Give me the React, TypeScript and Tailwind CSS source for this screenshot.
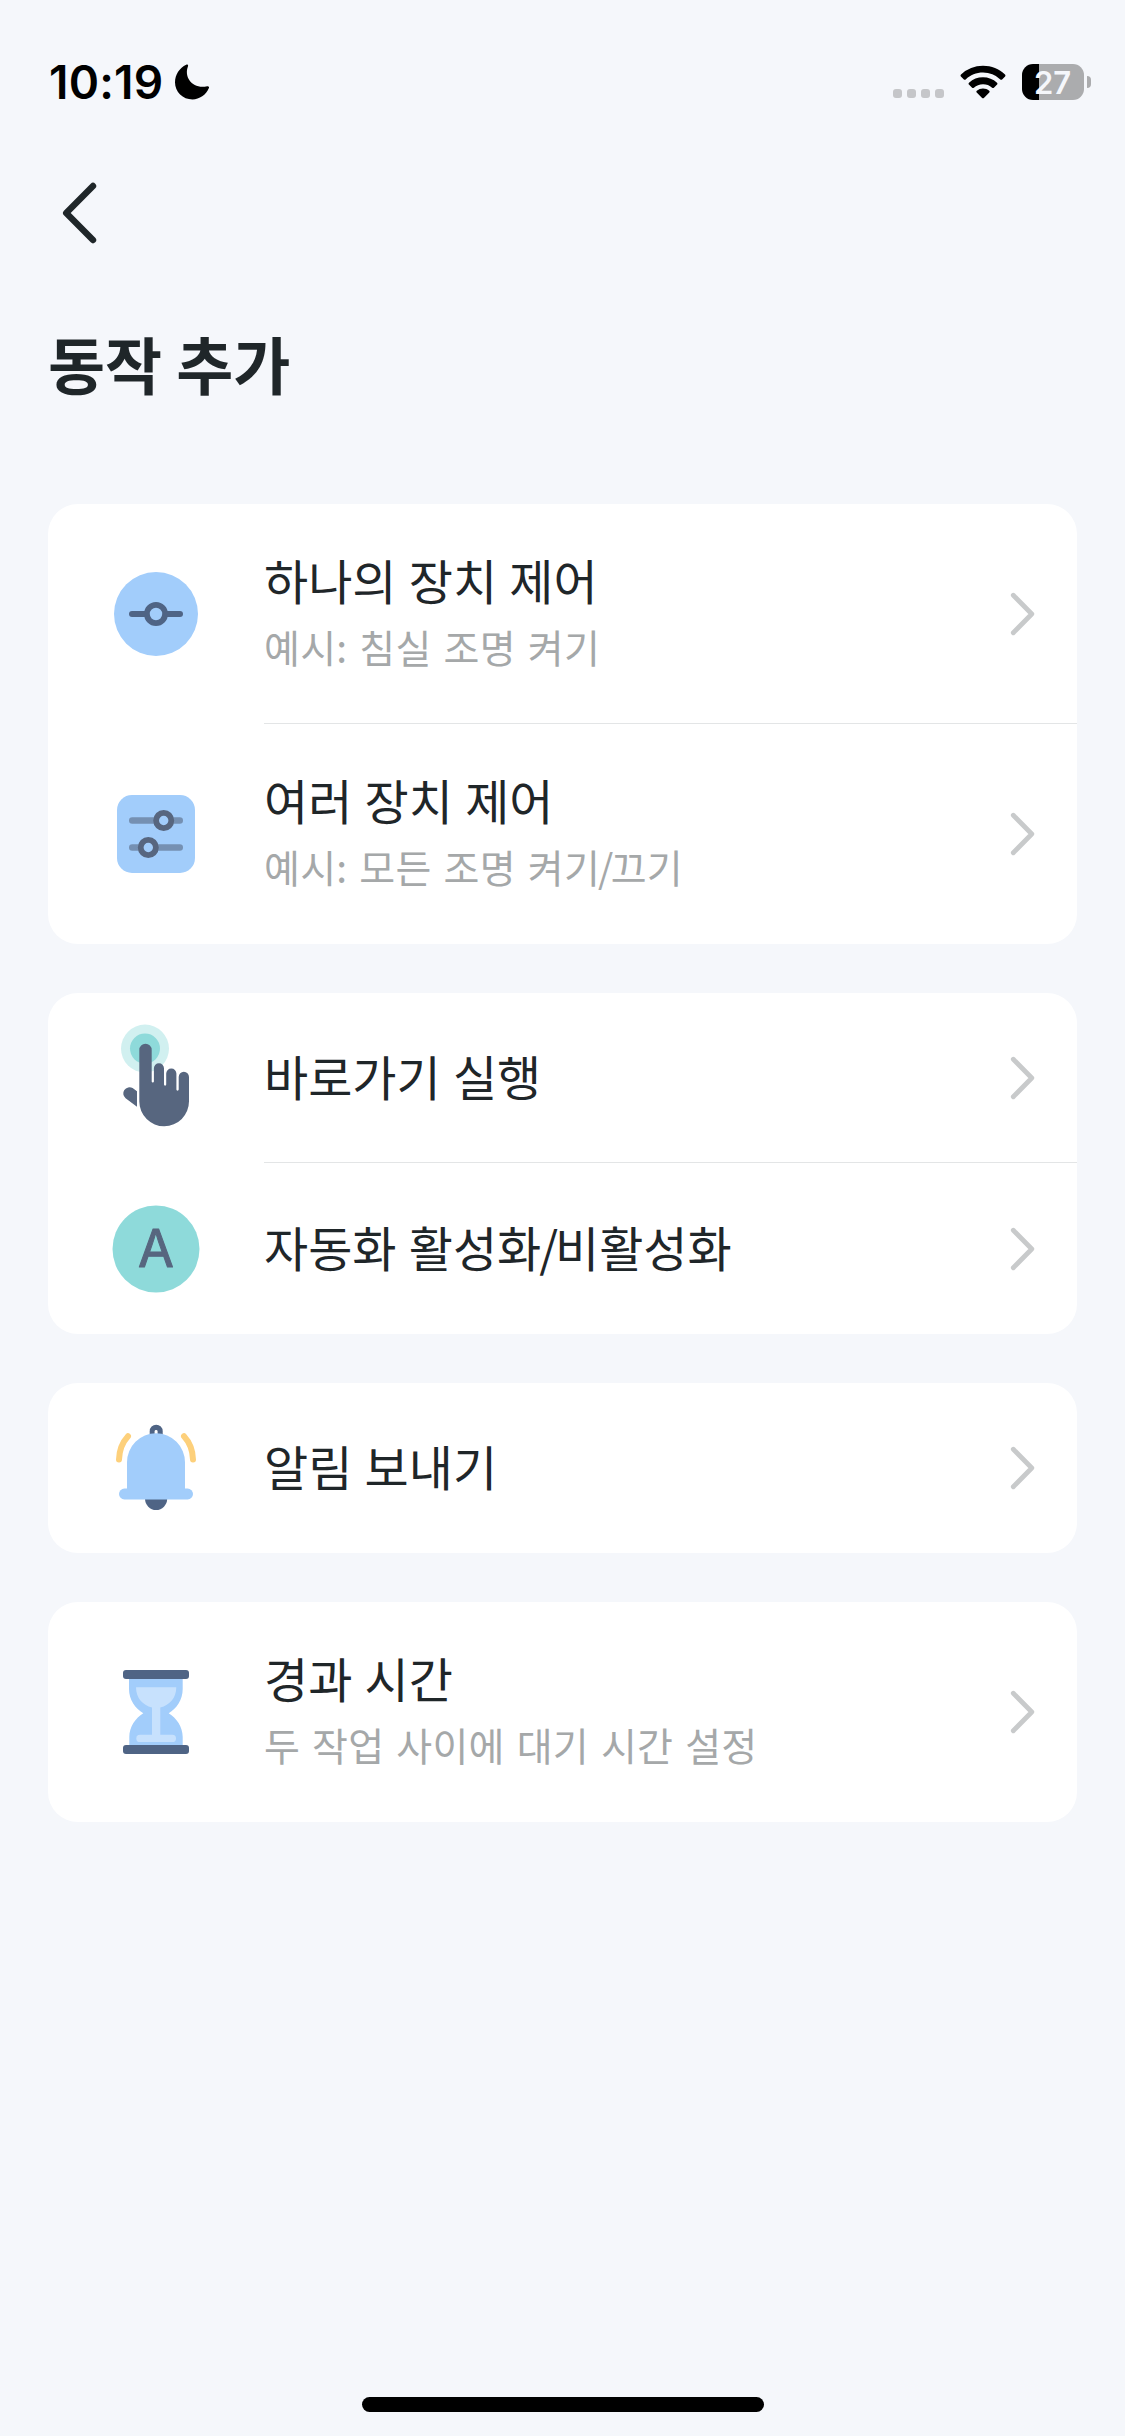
import type { ReactNode } from "react";

const Chevron = () => (
  <svg className="mr-[41px] h-[46px] w-[28px] shrink-0" viewBox="0 0 28 46" fill="none">
    <path d="M5.3 4.3 23.8 23 5.3 41.7" stroke="#c8cacb" strokeWidth="4.8" strokeLinecap="round" strokeLinejoin="round" />
  </svg>
);

const Icon = ({ children }: { children: ReactNode }) => (
  <svg className="h-[108px] w-[108px] shrink-0" viewBox="0 0 108 108" fill="none">
    {children}
  </svg>
);

const SingleDeviceIcon = () => (
  <Icon>
    <circle cx="54" cy="54" r="42" fill="#a2cdfb" />
    <path d="M30 54h48" stroke="#4f6485" strokeWidth="6" strokeLinecap="round" />
    <circle cx="54" cy="54" r="9.1" fill="#a2cdfb" stroke="#4f6485" strokeWidth="5.8" />
  </Icon>
);

const MultiDeviceIcon = () => (
  <Icon>
    <rect x="15" y="15" width="78" height="78" rx="15" fill="#a2cdfb" />
    <path d="M30.2 40.5h47.6M30.2 67.5h47.6" stroke="#7590b2" strokeWidth="6.4" strokeLinecap="round" />
    <circle cx="61.7" cy="40.5" r="7.6" fill="#a2cdfb" stroke="#57667f" strokeWidth="5.8" />
    <circle cx="46.3" cy="67.5" r="7.6" fill="#a2cdfb" stroke="#57667f" strokeWidth="5.8" />
  </Icon>
);

const TapIcon = () => (
  <Icon>
    <circle cx="43" cy="24.6" r="24" fill="#d1f0f0" />
    <circle cx="43" cy="24.6" r="15" fill="#8edada" />
    <path
      d="M37.3 77.5V26a6.2 6.2 0 0 1 12.4 0v31.4a1.1 1.1 0 0 0 2.2 0V44.3a5 5 0 0 1 10.1 0v16.3a1.1 1.1 0 0 0 2.2 0V49.5a5 5 0 0 1 10.2 0v16a1.1 1.1 0 0 0 2.3 0V53a5.1 5.1 0 0 1 10.3 0v24.3a24.8 24.8 0 0 1-49.7.2Z"
      fill="#57667f"
    />
    <path d="M35 67.2v15.5L23.6 74.3a6.2 6.2 0 0 1 7-10.2Z" fill="#57667f" />
  </Icon>
);

const AutomationIcon = () => (
  <Icon>
    <circle cx="54" cy="54" r="43.5" fill="#8edada" />
    <text
      x="54"
      y="71.7"
      textAnchor="middle"
      fill="#57667f"
      stroke="#57667f"
      strokeWidth="1"
      strokeLinejoin="round"
      className="font-['Inter',sans-serif] text-[52px] font-normal"
    >
      A
    </text>
  </Icon>
);

const BellIcon = () => (
  <Icon>
    <path d="M47.7 22v-4.8a6.5 6.5 0 0 1 13 0V22Z" fill="#4f6485" />
    <rect x="52.6" y="16" width="3" height="6" rx="1.4" fill="#fff" />
    <path d="M43 84.5h22.2a11.1 11.5 0 0 1-22.2 0Z" fill="#4f6485" />
    <path d="M25 78V48.3a29 29 0 0 1 58 0V78Z" fill="#a2cdfb" />
    <rect x="17" y="74.6" width="74" height="10.8" rx="5.4" fill="#a2cdfb" />
    <path d="M26 22.3q-8.6 9.4-9 23.2M82 22.3q8.6 9.4 9 23.2" stroke="#fdd07b" strokeWidth="6" strokeLinecap="round" />
  </Icon>
);

const HourglassIcon = () => (
  <Icon>
    <path
      d="M27 20v11c0 11 6.5 19.5 14.3 24.3C33.5 60 27.3 69 27.3 79v9h53.4v-9c0-10-6.2-19-14-23.7C74.5 50.500 80.700 42 80.700 31V20Z"
      fill="#a2cdfb"
    />
    <path d="M34 29.3h40.3c0 10.500-6.500 18-16 20.200V77.500h-8.300V49.500C40.500 47.300 34 39.800 34 29.300Z" fill="#c7e1fd" />
    <rect x="34.3" y="76.8" width="39.7" height="7.2" rx="3.6" fill="#c7e1fd" />
    <rect x="21" y="12" width="66" height="9" rx="3" fill="#4f6485" />
    <rect x="21" y="87" width="66" height="9" rx="3" fill="#4f6485" />
  </Icon>
);

type Item = { icon: ReactNode; title: ReactNode; subtitle?: ReactNode };

const Slash = () => <span className="-mr-[3px] -ml-[2px]">/</span>;

const groups: Item[][] = [
  [
    { icon: <SingleDeviceIcon />, title: "하나의 장치 제어", subtitle: "예시: 침실 조명 켜기" },
    {
      icon: <MultiDeviceIcon />,
      title: "여러 장치 제어",
      subtitle: (
        <>
          예시: 모든 조명 켜기
          <Slash />
          끄기
        </>
      ),
    },
  ],
  [
    { icon: <TapIcon />, title: "바로가기 실행" },
    {
      icon: <AutomationIcon />,
      title: (
        <>
          자동화 활성화
          <Slash />
          비활성화
        </>
      ),
    },
  ],
  [{ icon: <BellIcon />, title: "알림 보내기" }],
  [{ icon: <HourglassIcon />, title: "경과 시간", subtitle: "두 작업 사이에 대기 시간 설정" }],
];

const rowHeight = (item: Item, index: number) => {
  if (item.subtitle) return "h-[220px]";
  return index > 0 ? "h-[171px]" : "h-[170px]";
};

const Row = ({ item, index, divided }: { item: Item; index: number; divided: boolean }) => (
  <button type="button" className="flex w-full items-center pl-[54px] text-left">
    {item.icon}
    <div
      className={`ml-[54px] flex flex-1 items-center justify-between ${rowHeight(item, index)} ${divided ? "border-b border-[#e3e5e6]" : ""}`}
    >
      <div className={`whitespace-nowrap ${item.subtitle ? "pb-[4px]" : "pb-[6px]"}`}>
        <p className="text-[48px] leading-[68px] text-[#1f2629] [word-spacing:1.5px]">{item.title}</p>
        {item.subtitle && (
          <p className="text-[39px] leading-[66px] tracking-[0.25px] text-[#a5a8a9] [word-spacing:3px]">
            {item.subtitle}
          </p>
        )}
      </div>
      <Chevron />
    </div>
  </button>
);

const StatusBar = () => (
  <div className="flex h-[132px] items-center justify-between pt-[32px] pr-[34px] pl-[49px]">
    <div className="flex items-center gap-[11px]">
      <span className="font-['Inter',sans-serif] text-[46px] leading-none font-semibold tracking-[0.2px]">10:19</span>
      <svg className="h-[36px] w-[36px]" viewBox="0 0 36 36">
        <path
          d="M12.2.8C13.3.2 14.5 1 14 2.200 9.500 13.500 19 25.500 33.200 22.200c1.300-.3 2.200.6 1.700 1.900C32 31 25.500 35.500 18.500 35.500 8.800 35.500 1 28 1 18.300 1 10.500 5.500 4 12.200.8Z"
          fill="#000"
        />
      </svg>
    </div>
    <div className="flex items-center">
      <div className="mt-[23px] flex gap-[5px]">
        <span className="h-[9px] w-[9px] rounded-[3px] bg-[#c5c6c9]" />
        <span className="h-[9px] w-[9px] rounded-[3px] bg-[#c5c6c9]" />
        <span className="h-[9px] w-[9px] rounded-[3px] bg-[#c5c6c9]" />
        <span className="h-[9px] w-[9px] rounded-[3px] bg-[#c5c6c9]" />
      </div>
      <svg className="ml-[16px] h-[34px] w-[46px]" viewBox="0 0 46 34">
        <path d="M23 .8c8.500 0 16.200 3.300 22 8.700.6.600.6 1.300.1 1.900l-3 3c-.5.500-1.200.5-1.800 0A25.300 25.300 0 0 0 23 7.600c-6.700 0-12.700 2.600-17.300 6.800-.6.500-1.300.5-1.800 0l-3-3C.4 10.800.4 10.100 1 9.500A32.200 32.200 0 0 1 23 .8Z" />
        <path d="M23 12.300c5.300 0 10.200 2 14 5.400.6.500.6 1.300.1 1.800l-3.200 3.200c-.5.500-1.200.5-1.800 0A13.700 13.700 0 0 0 23 19.300c-3.500 0-6.700 1.300-9.100 3.400-.6.500-1.300.5-1.800 0l-3.200-3.200c-.5-.5-.5-1.300.1-1.800a21 21 0 0 1 14-5.400Z" />
        <path d="M23 23.600c2.400 0 4.500.8 6.200 2.200.6.500.6 1.200.1 1.700l-5.400 5.400c-.5.500-1.300.5-1.800 0l-5.400-5.400c-.5-.5-.5-1.200.1-1.700a9.700 9.700 0 0 1 6.200-2.200Z" />
      </svg>
      <div className="ml-[16px] flex h-[36px] w-[62px] items-center justify-center rounded-[11px] bg-[linear-gradient(90deg,#000_17px,#abacae_17px)] pr-[1px] font-['Inter',sans-serif] text-[31px] leading-none font-semibold text-[#f5f7fb]">
        27
      </div>
      <span className="ml-[3px] h-[12px] w-[4px] rounded-r-full bg-[#abacae]" />
    </div>
  </div>
);

const App = () => (
  <div className="flex h-[2436px] w-[1125px] flex-col overflow-hidden bg-[#f5f7fb] font-['Noto_Sans_CJK_KR',sans-serif]">
    <StatusBar />
    <header className="px-[48px]">
      <button type="button" aria-label="뒤로" className="mt-[48px] ml-[12px] block">
        <svg className="h-[66px] w-[40px]" viewBox="0 0 40 66" fill="none">
          <path d="M33 6 6.2 33 33 60" stroke="#1f2629" strokeWidth="6.4" strokeLinecap="round" strokeLinejoin="round" />
        </svg>
      </button>
      <h1 className="mt-[73px] text-[62px] leading-[88px] font-bold text-[#1f2629]">동작 추가</h1>
    </header>
    <main className="mt-[97px] flex flex-1 flex-col gap-[49px] px-[48px]">
      {groups.map((items, g) => (
        <section key={g} className="overflow-hidden rounded-[30px] bg-white">
          {items.map((item, i) => (
            <Row key={i} item={item} index={i} divided={i < items.length - 1} />
          ))}
        </section>
      ))}
    </main>
    <div className="mb-[24px] h-[15px] w-[402px] self-center rounded-full bg-black" />
  </div>
);

export default App;
